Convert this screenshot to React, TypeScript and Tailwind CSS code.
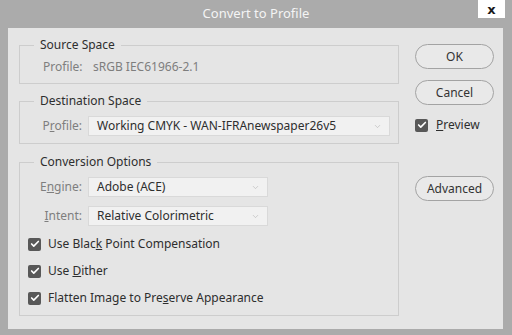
import { Check, ChevronDown } from 'lucide-react';

const font = { fontFamily: '"Noto Sans", "Open Sans", sans-serif' };

function CheckBox({ children }: { children: React.ReactNode }) {
  return (
    <div className="flex items-center gap-[7px] h-[16px]">
      <div className="w-[13px] h-[13px] rounded-[2px] bg-[#585858] flex items-center justify-center">
        <Check className="w-[10px] h-[10px] text-white" strokeWidth={4} />
      </div>
      <span className="text-[12px] text-[#2e2e2e] leading-[16px]">{children}</span>
    </div>
  );
}

function Select({ value, width }: { value: string; width: string }) {
  return (
    <div className={`${width} h-[20px] bg-[#f1f1f1] border border-[#d9d9d9] flex items-center justify-between pl-[8px] pr-[7px]`}>
      <span className="text-[12px] text-[#2e2e2e] leading-[16px]">{value}</span>
      <ChevronDown className="w-[9px] h-[9px] text-[#b0b0b0]" strokeWidth={1.5} />
    </div>
  );
}

function Group({ title, className, children }: { title: string; className?: string; children: React.ReactNode }) {
  return (
    <fieldset className={`border border-[#cdcdcd] ${className ?? ''}`}>
      <legend className="ml-[14px] px-[6px] text-[12px] leading-[18px] text-[#2e2e2e]">{title}</legend>
      {children}
    </fieldset>
  );
}

function Button({ label, className }: { label: string; className?: string }) {
  return (
    <div className={`w-[79px] h-[25px] rounded-full border border-[#a3a3a3] bg-[#e9e9e9] flex items-center justify-center text-[12px] text-[#333] ${className ?? ''}`}>
      {label}
    </div>
  );
}

export default function App() {
  return (
    <div className="w-[512px] h-[335px] bg-[#ababab] flex flex-col" style={font}>
      {/* Title bar */}
      <div className="h-[28px] relative flex items-center justify-center">
        <span className="text-[13px] text-[#f4f4f4]">Convert to Profile</span>
        <div className="absolute top-0 right-[7px] w-[27px] h-[18px] bg-white flex items-center justify-center">
          <span className="text-[13px] font-bold text-[#1a1a1a] leading-none" style={{ fontFamily: '"DejaVu Sans", sans-serif' }}>x</span>
        </div>
      </div>

      {/* Body */}
      <div className="ml-[8px] mr-[9px] h-[301px] bg-[#e5e5e5] flex pl-[11px]">
        <div className="w-[380px] flex flex-col pt-[8px] gap-[8px]">
          <Group title="Source Space" className="h-[48px]">
            <div className="flex items-center h-[16px] mt-[5px] text-[12px] text-[#7e7e7e] leading-[16px]">
              <span className="w-[73px] pl-[23px]">Profile:</span>
              <span>sRGB IEC61966-2.1</span>
            </div>
          </Group>

          <Group title="Destination Space" className="h-[52px]">
            <div className="flex items-center mt-[6px]">
              <span className="w-[62px] text-right text-[12px] text-[#7e7e7e]">
                P<u>r</u>ofile:
              </span>
              <div className="ml-[6px]">
                <Select value="Working CMYK - WAN-IFRAnewspaper26v5" width="w-[302px]" />
              </div>
            </div>
          </Group>

          <Group title="Conversion Options" className="h-[163px] mt-[1px]">
            <div className="flex flex-col gap-[9px] mt-[6px]">
              <div className="flex items-center">
                <span className="w-[62px] text-right text-[12px] text-[#7e7e7e]">
                  E<u>n</u>gine:
                </span>
                <div className="ml-[6px]">
                  <Select value="Adobe (ACE)" width="w-[180px]" />
                </div>
              </div>
              <div className="flex items-center">
                <span className="w-[62px] text-right text-[12px] text-[#7e7e7e]">
                  <u>I</u>ntent:
                </span>
                <div className="ml-[6px]">
                  <Select value="Relative Colorimetric" width="w-[180px]" />
                </div>
              </div>
            </div>
            <div className="flex flex-col gap-[11px] mt-[10px] pl-[8px]">
              <CheckBox>Use Blac<u>k</u> Point Compensation</CheckBox>
              <CheckBox>Use <u>D</u>ither</CheckBox>
              <CheckBox>Flatten Image to Pre<u>s</u>erve Appearance</CheckBox>
            </div>
          </Group>
        </div>

        {/* Right column */}
        <div className="ml-[16px] flex flex-col pt-[16px]">
          <Button label="OK" />
          <Button label="Cancel" className="mt-[11px]" />
          <div className="mt-[12px] flex items-center gap-[8px] h-[16px]">
            <div className="w-[13px] h-[13px] rounded-[2px] bg-[#585858] flex items-center justify-center">
              <Check className="w-[10px] h-[10px] text-white" strokeWidth={4} />
            </div>
            <span className="text-[12px] text-[#2e2e2e]">
              <u>P</u>review
            </span>
          </div>
          <Button label="Advanced" className="mt-[43px]" />
        </div>
      </div>
    </div>
  );
}
